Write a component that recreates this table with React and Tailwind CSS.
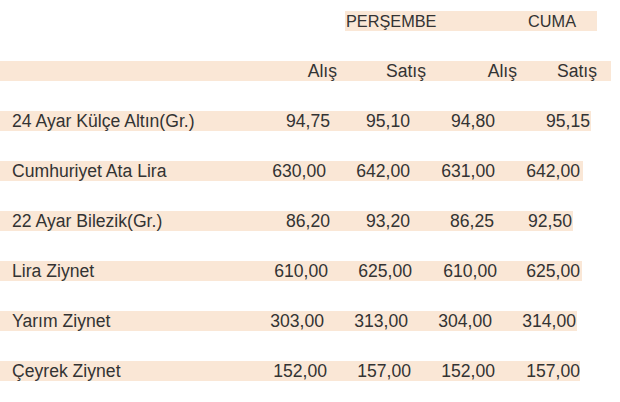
import React from "react";

const rows = [
  {
    label: "24 Ayar Külçe Altın(Gr.)",
    vals: ["94,75", "95,10", "94,80", "95,15"],
    bar: "w-[591px] pr-px",
    c1: "w-[80px]", c2: "w-[80px]", c3: "w-[85px]", c4: "w-[95px]",
  },
  {
    label: "Cumhuriyet Ata Lira",
    vals: ["630,00", "642,00", "631,00", "642,00"],
    bar: "w-[583px] pr-[3px]",
    c1: "w-[80px]", c2: "w-[84px]", c3: "w-[85px]", c4: "w-[85px]",
  },
  {
    label: "22 Ayar Bilezik(Gr.)",
    vals: ["86,20", "93,20", "86,25", "92,50"],
    bar: "w-[573px] pr-px",
    c1: "w-[80px]", c2: "w-[80px]", c3: "w-[84px]", c4: "w-[78px]",
  },
  {
    label: "Lira Ziynet",
    vals: ["610,00", "625,00", "610,00", "625,00"],
    bar: "w-[582px] pr-[2px]",
    c1: "w-[80px]", c2: "w-[84px]", c3: "w-[85px]", c4: "w-[83px]",
  },
  {
    label: "Yarım Ziynet",
    vals: ["303,00", "313,00", "304,00", "314,00"],
    bar: "w-[577px] pr-px",
    c1: "w-[80px]", c2: "w-[84px]", c3: "w-[84px]", c4: "w-[84px]",
  },
  {
    label: "Çeyrek Ziynet",
    vals: ["152,00", "157,00", "152,00", "157,00"],
    bar: "w-[580px] pr-0",
    c1: "w-[80px]", c2: "w-[84px]", c3: "w-[84px]", c4: "w-[85px]",
  },
];

function Row({ label, vals, bar, c1, c2, c3, c4 }) {
  return (
    <div className={`flex h-5 items-center bg-[#fae7d6] leading-5 ${bar}`}>
      <div className="flex-1 whitespace-nowrap pl-3">{label}</div>
      <div className={`${c1} text-right`}>{vals[0]}</div>
      <div className={`${c2} text-right`}>{vals[1]}</div>
      <div className={`${c3} text-right`}>{vals[2]}</div>
      <div className={`${c4} text-right`}>{vals[3]}</div>
    </div>
  );
}

export default function App() {
  return (
    <div
      className="h-[402px] w-[620px] overflow-hidden bg-white text-[17.6px] text-[#333333]"
      style={{ fontFamily: '"Liberation Sans", Arial, sans-serif' }}
    >
      <div className="flex flex-col gap-[30px] pt-[11px]">
        <div className="ml-[345px] flex h-5 w-[252px] items-center justify-between bg-[#fae7d6] pl-px pr-[21px] text-[16.3px] leading-5">
          <span>PERŞEMBE</span>
          <span>CUMA</span>
        </div>
        <div className="flex h-5 w-[611px] items-center bg-[#fae7d6] pr-[14px] leading-5">
          <div className="flex-1" />
          <div className="w-[80px] text-right">Alış</div>
          <div className="w-[89px] text-right">Satış</div>
          <div className="w-[91px] text-right">Alış</div>
          <div className="w-[80px] text-right">Satış</div>
        </div>
        {rows.map((r) => (
          <Row key={r.label} {...r} />
        ))}
      </div>
    </div>
  );
}
